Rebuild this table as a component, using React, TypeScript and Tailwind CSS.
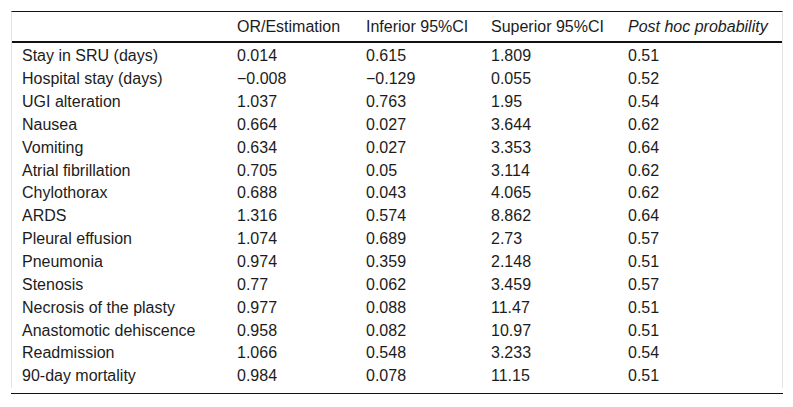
import React from "react";

type Row = [string, string, string, string, string];

const rows: Row[] = [
  ["Stay in SRU (days)", "0.014", "0.615", "1.809", "0.51"],
  ["Hospital stay (days)", "\u22120.008", "\u22120.129", "0.055", "0.52"],
  ["UGI alteration", "1.037", "0.763", "1.95", "0.54"],
  ["Nausea", "0.664", "0.027", "3.644", "0.62"],
  ["Vomiting", "0.634", "0.027", "3.353", "0.64"],
  ["Atrial fibrillation", "0.705", "0.05", "3.114", "0.62"],
  ["Chylothorax", "0.688", "0.043", "4.065", "0.62"],
  ["ARDS", "1.316", "0.574", "8.862", "0.64"],
  ["Pleural effusion", "1.074", "0.689", "2.73", "0.57"],
  ["Pneumonia", "0.974", "0.359", "2.148", "0.51"],
  ["Stenosis", "0.77", "0.062", "3.459", "0.57"],
  ["Necrosis of the plasty", "0.977", "0.088", "11.47", "0.51"],
  ["Anastomotic dehiscence", "0.958", "0.082", "10.97", "0.51"],
  ["Readmission", "1.066", "0.548", "3.233", "0.54"],
  ["90-day mortality", "0.984", "0.078", "11.15", "0.51"],
];

const cols = "grid grid-cols-[215px_129px_125px_137px_164px]";

export default function App() {
  return (
    <div className="w-[793px] h-[407px] bg-white pt-[11px] pl-[11px] font-['Liberation_Sans',Arial,sans-serif] text-[16px] text-[#1c1c1c]">
      <div className="w-[772px] border-t border-x border-t-[#111] border-x-[#e4e4e4]">
        {/* Header */}
        <div className={`${cols} h-[31px] items-center border-b-2 border-[#111]`}>
          <div className="pl-[10px]"></div>
          <div className="pl-[10px]">OR/Estimation</div>
          <div className="pl-[10px]">Inferior 95%CI</div>
          <div className="pl-[10px]">Superior 95%CI</div>
          <div className="pl-[10px] italic">Post hoc probability</div>
        </div>

        {/* Body */}
        <div className="pt-[2px]">
          {rows.map((r) => (
            <div key={r[0]} className={`${cols} h-[22.85px] items-center`}>
              {r.map((c, i) => (
                <div key={i} className="pl-[10px] whitespace-nowrap leading-none">
                  {c}
                </div>
              ))}
            </div>
          ))}
        </div>
      </div>
      <div className="w-[772px] h-px bg-[#111] mt-[5px]"></div>
    </div>
  );
}
